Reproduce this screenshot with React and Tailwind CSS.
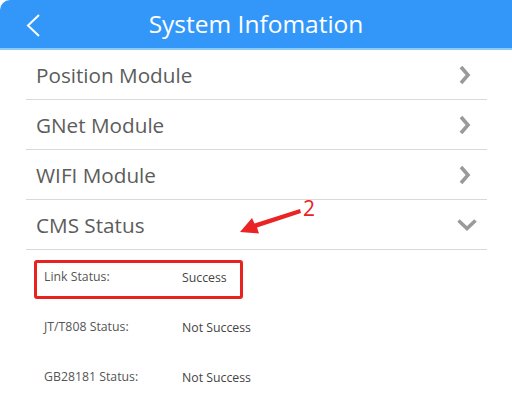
import React from "react";

function RightChevron() {
  return (
    <svg width="14" height="20" viewBox="0 0 14 20" className="block">
      <polyline points="3,2 10,10 3,18" fill="none" stroke="#9a9a9a" strokeWidth="3.6" strokeLinejoin="miter" />
    </svg>
  );
}

function DownChevron() {
  return (
    <svg width="20" height="12" viewBox="0 0 20 12" className="block">
      <polyline points="1.5,1.5 10,9.5 18.5,1.5" fill="none" stroke="#9a9a9a" strokeWidth="3.6" strokeLinejoin="miter" />
    </svg>
  );
}

const modules = ["Position Module", "GNet Module", "WIFI Module"];
const statuses = [
  ["Link Status:", "Success"],
  ["JT/T808 Status:", "Not Success"],
  ["GB28181 Status:", "Not Success"],
];

export default function App() {
  return (
    <div className="relative w-[512px] h-[399px] overflow-hidden bg-white font-['Open_Sans','Noto_Sans',sans-serif]">
      <div className="relative h-[50px] bg-[#3397fa] rounded-tl-[10px] border-b-2 border-[#8ccaf8] flex items-center justify-center">
        <svg width="16" height="24" viewBox="0 0 16 24" className="absolute left-[25px] top-[13px]">
          <polyline points="14,2 3,12.5 14,23" fill="none" stroke="#ffffff" strokeWidth="2" />
        </svg>
        <span className="text-white text-[24.5px] leading-none">System Infomation</span>
      </div>
      <div className="mx-[26px] w-[461px]">
        {modules.map((m) => (
          <div key={m} className="h-[50px] border-b border-[#d9d9d9] flex items-center justify-between pl-[10px] pr-[15px]">
            <span className="text-[20.7px] text-[#5c5c5c] leading-none mt-[1px]">{m}</span>
            <RightChevron />
          </div>
        ))}
        <div className="h-[50px] border-b border-[#d9d9d9] flex items-center justify-between pl-[10px] pr-[10px]">
          <span className="text-[20.7px] text-[#5c5c5c] leading-none mt-[1px]">CMS Status</span>
          <DownChevron />
        </div>
        <div className="pl-[18px]">
          {statuses.map(([k, v]) => (
            <div key={k} className="h-[50px] flex items-center pt-[4px]">
              <span className="w-[138px] text-[12.3px] text-[#555555] leading-none">{k}</span>
              <span className="text-[12.3px] text-[#444444] leading-none mt-[2px]">{v}</span>
            </div>
          ))}
        </div>
      </div>
      <div className="absolute left-[34px] top-[260px] w-[209px] h-[39px] border-[3px] border-[#e8231f] rounded-[3px]" />
      <svg width="80" height="40" viewBox="0 0 80 40" className="absolute left-[230px] top-[205px]">
        <polygon points="70,4 71,8 27,22.5 29,28.5 10,27 22,13 24.5,18.5" fill="#ea2424" />
      </svg>
      <span className="absolute left-[303px] top-[198px] text-[21px] leading-none text-[#e8231f]">2</span>
    </div>
  );
}
